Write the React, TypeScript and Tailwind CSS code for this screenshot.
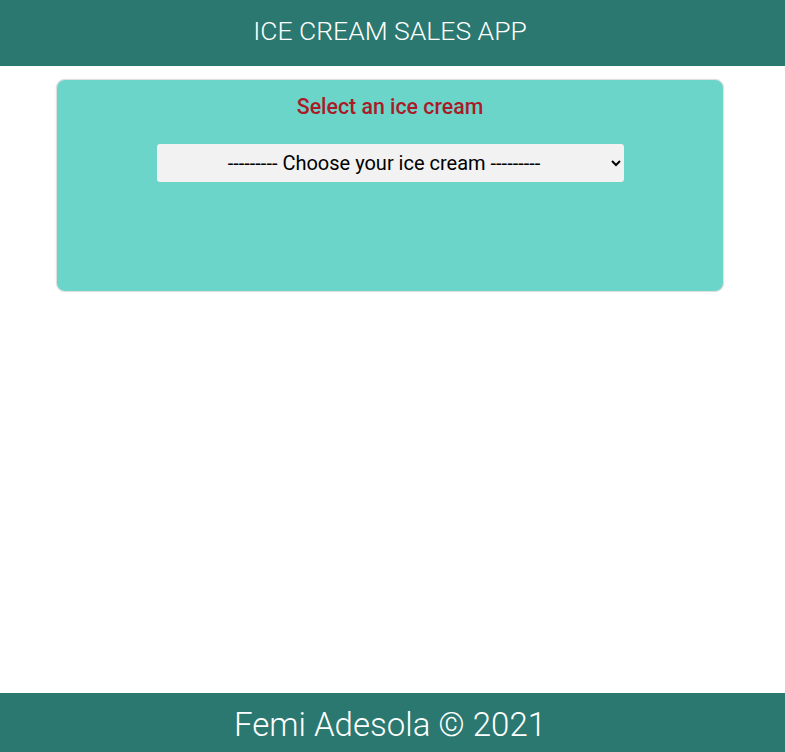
export default function App() {
  return (
    <div className="flex min-h-screen flex-col bg-white font-['Roboto',sans-serif]">
      <header className="flex h-[66px] items-center justify-center bg-[#2a786f] pr-[5px] pb-[5px]">
        <h1 className="text-[26.5px] font-light text-white">
          ICE CREAM SALES APP
        </h1>
      </header>
      <main className="flex-1 pt-[13px]">
        <div className="ml-[56px] flex h-[213px] w-[668px] flex-col items-center rounded-[9px] border border-[#e0e0e0] bg-[#6cd5c9] pt-[13px] shadow-[0_0_2px_rgba(0,0,0,0.08)]">
          <h2 className="text-[21.3px] font-medium leading-[28px] text-[#a81c2a]">
            Select an ice cream
          </h2>
          <select className="mt-[23px] h-[38px] w-[467px] rounded-[3px] bg-[#f2f2f2] px-2 text-center text-[20px] text-black outline-none">
            <option>--------- Choose your ice cream ---------</option>
          </select>
        </div>
      </main>
      <footer className="flex h-[59px] items-center justify-center bg-[#2a786f] pr-[5px] pt-[4px]">
        <p className="text-[33px] font-light text-white">
          Femi Adesola © 2021
        </p>
      </footer>
    </div>
  );
}
